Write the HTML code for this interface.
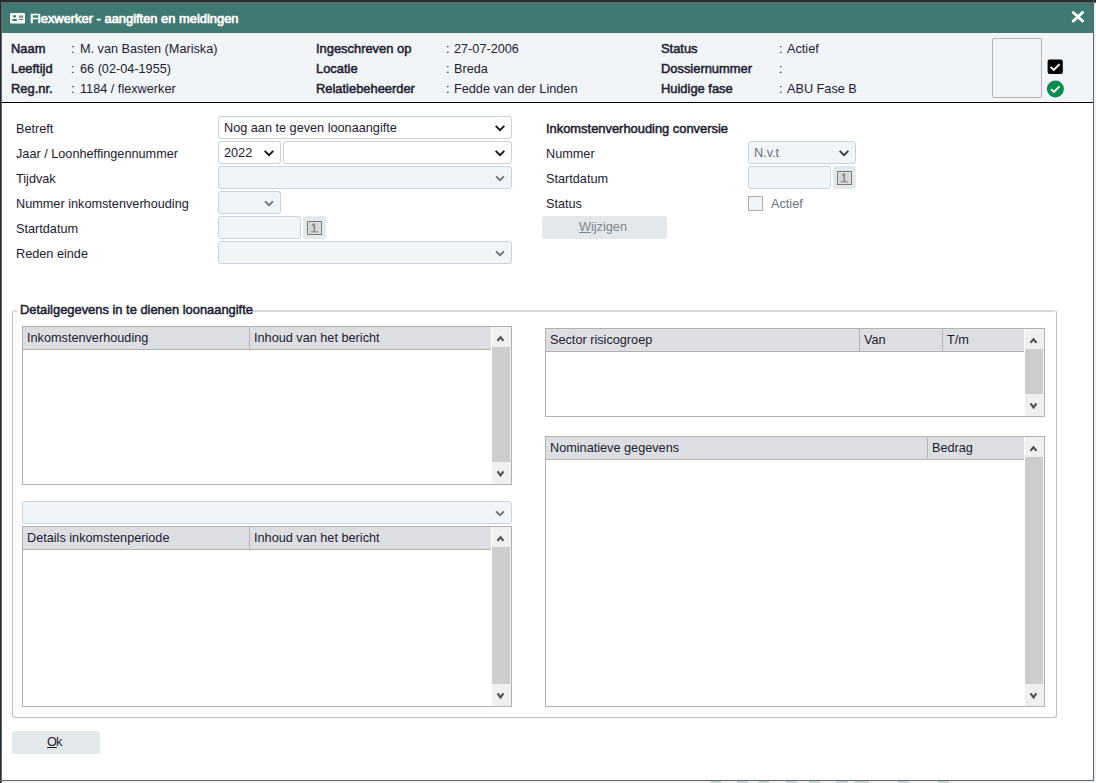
<!DOCTYPE html>
<html><head><meta charset="utf-8">
<style>
*{box-sizing:border-box;margin:0;padding:0}
html,body{width:1096px;height:783px;overflow:hidden;background:#eff3f5}
body{position:relative;font-family:"Liberation Sans",sans-serif;color:#1c2030}
.a{position:absolute}
.t{position:absolute;font-size:12.7px;line-height:14px;white-space:nowrap}
.b{position:absolute;font-size:12.9px;line-height:14px;-webkit-text-stroke:0.5px currentColor;white-space:nowrap}
.sel{position:absolute;border:1px solid #c9d2da;border-radius:3px;background:#fff;height:23px}
.sel.dis{background:#f1f5f8}
.chev{position:absolute;right:6px;top:8px;width:10px;height:7px}
.btn{position:absolute;background:#e3e8eb;border-radius:3px}
.tbl{position:absolute;border:1px solid #b2b2b2;background:#fff}
.th{position:absolute;left:0;top:0;height:23px;background:#dddee2;border-bottom:1px solid #b2b2b2}
.thc{position:absolute;top:0;height:22px;border-left:1px solid #b4b4b4}
.sb{position:absolute;top:0;bottom:0;right:0;width:19px;background:#f0f0f0}
.thumb{position:absolute;left:0;right:1px;top:20px;bottom:22px;background:#cdcdcd}
.up,.dn{position:absolute;left:4px;width:9px;height:8px}
.up{top:7px}.dn{bottom:6px}
.up path,.dn path{stroke:#505050;stroke-width:2.1;fill:none}
</style></head><body>
<!-- window frame -->
<div class="a" style="left:0;top:0;width:1094px;height:781px;background:#fff"></div>
<div class="a" style="left:0;top:0;width:1096px;height:3px;background:#646464"></div>
<div class="a" style="left:0;top:0;width:2px;height:783px;background:#646464"></div>
<div class="a" style="left:0;top:0;width:1096px;height:2px;background:#232d34"></div>
<div class="a" style="left:0;top:0;width:1px;height:783px;background:#232d34"></div>
<div class="a" style="left:1093px;top:0;width:1px;height:781px;background:#646464"></div>
<div class="a" style="left:0;top:780px;width:1094px;height:1px;background:#646464"></div>
<div class="a" style="left:0;top:781px;width:1px;height:2px;background:#232d34"></div>
<div class="a" style="left:710px;top:781px;width:11px;height:2px;background:#c9d3da"></div>
<div class="a" style="left:737px;top:781px;width:11px;height:2px;background:#c9d3da"></div>
<div class="a" style="left:758px;top:781px;width:11px;height:2px;background:#c9d3da"></div>
<div class="a" style="left:786px;top:781px;width:11px;height:2px;background:#c9d3da"></div>
<div class="a" style="left:809px;top:781px;width:11px;height:2px;background:#c9d3da"></div>
<div class="a" style="left:836px;top:781px;width:12px;height:2px;background:#c9d3da"></div>
<div class="a" style="left:854px;top:781px;width:15px;height:2px;background:#c9d3da"></div>
<div class="a" style="left:898px;top:781px;width:11px;height:2px;background:#c9d3da"></div>
<div class="a" style="left:938px;top:781px;width:11px;height:2px;background:#c9d3da"></div>
<!-- title bar -->
<div class="a" style="left:2px;top:3px;width:1091px;height:30px;background:#407971"></div>
<svg class="a" style="left:10px;top:12px" width="16" height="12" viewBox="0 0 16 12">
<rect x="0" y="0.9" width="15" height="10.7" rx="1.2" fill="#fff"/>
<circle cx="4.6" cy="4.3" r="1.4" fill="#417970"/>
<rect x="2.1" y="7.1" width="5" height="2" rx="1" fill="#417970"/>
<rect x="9.1" y="3.4" width="3.9" height="2.4" fill="#417970" opacity="0.8"/>
<rect x="9.1" y="7" width="3.9" height="1" fill="#417970"/>
</svg>
<div class="b" style="left:30px;top:12px;color:#fff;-webkit-text-stroke:0.7px #fff">Flexwerker - aangiften en meldingen</div>
<svg class="a" style="left:1070px;top:9px" width="16" height="16" viewBox="0 0 16 16">
<path d="M3.3 3.5 L12.5 12.0 M12.5 3.5 L3.3 12.0" stroke="#fff" stroke-width="3" stroke-linecap="round"/>
</svg>
<!-- header info -->
<div class="a" style="left:2px;top:33px;width:1091px;height:69px;background:#f2f5f8"></div>
<div class="a" style="left:2px;top:102px;width:1091px;height:1px;background:#000"></div>

<div class="b" style="left:11px;top:42px">Naam</div>
<div class="b" style="left:11px;top:62px">Leeftijd</div>
<div class="b" style="left:11px;top:82px">Reg.nr.</div>
<div class="t" style="left:71px;top:42px">:</div>
<div class="t" style="left:71px;top:62px">:</div>
<div class="t" style="left:71px;top:82px">:</div>
<div class="t" style="left:80px;top:42px">M. van Basten (Mariska)</div>
<div class="t" style="left:80px;top:62px">66 (02-04-1955)</div>
<div class="t" style="left:80px;top:82px">1184 / flexwerker</div>

<div class="b" style="left:316px;top:42px">Ingeschreven op</div>
<div class="b" style="left:316px;top:62px">Locatie</div>
<div class="b" style="left:316px;top:82px">Relatiebeheerder</div>
<div class="t" style="left:446px;top:42px">:</div>
<div class="t" style="left:446px;top:62px">:</div>
<div class="t" style="left:446px;top:82px">:</div>
<div class="t" style="left:454px;top:42px">27-07-2006</div>
<div class="t" style="left:454px;top:62px">Breda</div>
<div class="t" style="left:454px;top:82px">Fedde van der Linden</div>

<div class="b" style="left:661px;top:42px">Status</div>
<div class="b" style="left:661px;top:62px">Dossiernummer</div>
<div class="b" style="left:661px;top:82px">Huidige fase</div>
<div class="t" style="left:779px;top:42px">:</div>
<div class="t" style="left:779px;top:62px">:</div>
<div class="t" style="left:779px;top:82px">:</div>
<div class="t" style="left:787px;top:42px">Actief</div>
<div class="t" style="left:787px;top:82px">ABU Fase B</div>

<div class="a" style="left:992px;top:38px;width:50px;height:60px;border:1px solid #b4b4b4;border-radius:2px"></div>
<svg class="a" style="left:1047px;top:59px" width="17" height="16" viewBox="0 0 17 16">
<rect x="0.6" y="0.5" width="15.2" height="14.5" rx="2" fill="#000"/>
<path d="M3.6 7.9 L6.8 10.9 L12.6 5.1" stroke="#fff" stroke-width="1.9" fill="none"/>
</svg>
<svg class="a" style="left:1046px;top:80px" width="18" height="18" viewBox="0 0 18 18">
<circle cx="9.4" cy="8.9" r="8.5" fill="#068c4c"/>
<path d="M4.9 9.1 L7.9 12.0 L13.5 6.4" stroke="#fff" stroke-width="1.9" fill="none"/>
</svg>

<!-- form -->
<div class="t" style="left:16px;top:121.5px;">Betreft</div>
<div class="t" style="left:16px;top:146.5px;">Jaar / Loonheffingennummer</div>
<div class="t" style="left:16px;top:171.5px;">Tijdvak</div>
<div class="t" style="left:16px;top:196.5px;">Nummer inkomstenverhouding</div>
<div class="t" style="left:16px;top:221.5px;">Startdatum</div>
<div class="t" style="left:16px;top:246.5px;">Reden einde</div>
<div class="sel" style="left:218px;top:116px;width:294px"><div class="t" style="left:5px;top:3.5px">Nog aan te geven loonaangifte</div><svg class="chev" viewBox="0 0 10 7"><path d="M1.4 1.6 L5 5.2 L8.6 1.6" stroke="#15181d" stroke-width="2" stroke-linecap="square" fill="none"/></svg></div>
<div class="sel" style="left:218px;top:141px;width:63px"><div class="t" style="left:5px;top:3.5px">2022</div><svg class="chev" viewBox="0 0 10 7"><path d="M1.4 1.6 L5 5.2 L8.6 1.6" stroke="#15181d" stroke-width="2" stroke-linecap="square" fill="none"/></svg></div>
<div class="sel" style="left:283px;top:141px;width:229px"><svg class="chev" viewBox="0 0 10 7"><path d="M1.4 1.6 L5 5.2 L8.6 1.6" stroke="#15181d" stroke-width="2" stroke-linecap="square" fill="none"/></svg></div>
<div class="sel dis" style="left:218px;top:166px;width:294px"><svg class="chev" viewBox="0 0 10 7"><path d="M1.1 1.4 L5 5.2 L8.9 1.4" stroke="#6c7178" stroke-width="1.8" fill="none"/></svg></div>
<div class="sel dis" style="left:218px;top:191px;width:63px"><svg class="chev" viewBox="0 0 10 7"><path d="M1.1 1.4 L5 5.2 L8.9 1.4" stroke="#6c7178" stroke-width="1.8" fill="none"/></svg></div>
<div class="sel dis" style="left:218px;top:216px;width:83px"></div>
<div class="btn" style="left:303px;top:216px;width:23px;height:23px"><svg class="a" viewBox="0 0 15 14" width="15" height="14" style="left:4px;top:5px"><rect x="0.5" y="0.5" width="14" height="13" fill="#e2e2e2" stroke="#7a7a7a"/><path d="M3.2 1V13M5.7 1V13M8.2 1V13M10.7 1V13M1 3.3H14M1 5.8H14M1 8.3H14M1 10.8H14" stroke="#cacaca" stroke-width="0.7"/><path d="M5.2 4.6 L7.3 2.8 M7.3 2.6 V10.4" stroke="#858585" stroke-width="1.5" fill="none"/><path d="M3.8 10.8 H10.9" stroke="#858585" stroke-width="1.1"/></svg></div>
<div class="sel dis" style="left:218px;top:241px;width:294px"><svg class="chev" viewBox="0 0 10 7"><path d="M1.1 1.4 L5 5.2 L8.9 1.4" stroke="#6c7178" stroke-width="1.8" fill="none"/></svg></div>
<div class="b" style="left:546px;top:121.5px;">Inkomstenverhouding conversie</div>
<div class="t" style="left:546px;top:146.5px;">Nummer</div>
<div class="t" style="left:546px;top:171.5px;">Startdatum</div>
<div class="t" style="left:546px;top:196.5px;">Status</div>
<div class="sel dis" style="left:748px;top:141px;width:108px"><div class="t" style="left:5px;top:3.5px;color:#6c7178">N.v.t</div><svg class="chev" viewBox="0 0 10 7"><path d="M1.4 1.6 L5 5.2 L8.6 1.6" stroke="#3c4048" stroke-width="2" stroke-linecap="square" fill="none"/></svg></div>
<div class="sel dis" style="left:748px;top:166px;width:83px"></div>
<div class="btn" style="left:833px;top:166px;width:23px;height:23px"><svg class="a" viewBox="0 0 15 14" width="15" height="14" style="left:4px;top:5px"><rect x="0.5" y="0.5" width="14" height="13" fill="#e2e2e2" stroke="#7a7a7a"/><path d="M3.2 1V13M5.7 1V13M8.2 1V13M10.7 1V13M1 3.3H14M1 5.8H14M1 8.3H14M1 10.8H14" stroke="#cacaca" stroke-width="0.7"/><path d="M5.2 4.6 L7.3 2.8 M7.3 2.6 V10.4" stroke="#858585" stroke-width="1.5" fill="none"/><path d="M3.8 10.8 H10.9" stroke="#858585" stroke-width="1.1"/></svg></div>
<div class="a" style="left:748px;top:196px;width:15px;height:15px;border:1px solid #ababab;border-radius:0;background:#f2f5f8"></div>
<div class="t" style="left:771px;top:196.5px;color:#6c7178">Actief</div>
<div class="btn" style="left:542px;top:216px;width:125px;height:23px"></div>
<div class="t" style="left:579px;top:219.5px;color:#80868d"><u>W</u>ijzigen</div>

<!-- fieldset -->
<div class="a" style="left:12px;top:310px;width:1045px;height:408px;border:1px solid #c0c0c0;border-top-color:#d9d9d9;border-radius:3px"></div>
<div class="a" style="left:15px;top:311px;width:1039px;height:1px;background:#d9d9d9"></div>
<div class="a" style="left:17px;top:300px;width:235px;height:16px;background:#fff"></div>
<div class="b" style="left:20px;top:302.5px">Detailgegevens in te dienen loonaangifte</div>
<div class="tbl" style="left:22px;top:326px;width:490px;height:159px"><div class="th" style="width:468px"></div><div class="t" style="left:4px;top:3.5px">Inkomstenverhouding</div><div class="thc" style="left:226px"></div><div class="t" style="left:231px;top:3.5px">Inhoud van het bericht</div><div class="sb"><svg class="up" viewBox="0 0 9 8"><path d="M1.5 6.9 L4.5 3.1 L7.5 6.9"/></svg><div class="thumb"></div><svg class="dn" viewBox="0 0 9 8"><path d="M1.5 1.3 L4.5 5.4 L7.5 1.3"/></svg></div></div>
<div class="sel dis" style="left:22px;top:501px;width:490px"><svg class="chev" viewBox="0 0 10 7"><path d="M1.1 1.4 L5 5.2 L8.9 1.4" stroke="#6c7178" stroke-width="1.8" fill="none"/></svg></div>
<div class="tbl" style="left:22px;top:526px;width:490px;height:181px"><div class="th" style="width:468px"></div><div class="t" style="left:4px;top:3.5px">Details inkomstenperiode</div><div class="thc" style="left:226px"></div><div class="t" style="left:231px;top:3.5px">Inhoud van het bericht</div><div class="sb"><svg class="up" viewBox="0 0 9 8"><path d="M1.5 6.9 L4.5 3.1 L7.5 6.9"/></svg><div class="thumb"></div><svg class="dn" viewBox="0 0 9 8"><path d="M1.5 1.3 L4.5 5.4 L7.5 1.3"/></svg></div></div>
<div class="tbl" style="left:545px;top:328px;width:500px;height:89px"><div class="th" style="width:478px"></div><div class="t" style="left:4px;top:3.5px">Sector risicogroep</div><div class="thc" style="left:313px"></div><div class="t" style="left:318px;top:3.5px">Van</div><div class="thc" style="left:396px"></div><div class="t" style="left:401px;top:3.5px">T/m</div><div class="sb"><svg class="up" viewBox="0 0 9 8"><path d="M1.5 6.9 L4.5 3.1 L7.5 6.9"/></svg><div class="thumb"></div><svg class="dn" viewBox="0 0 9 8"><path d="M1.5 1.3 L4.5 5.4 L7.5 1.3"/></svg></div></div>
<div class="tbl" style="left:545px;top:436px;width:500px;height:271px"><div class="th" style="width:478px"></div><div class="t" style="left:4px;top:3.5px">Nominatieve gegevens</div><div class="thc" style="left:381px"></div><div class="t" style="left:386px;top:3.5px">Bedrag</div><div class="sb"><svg class="up" viewBox="0 0 9 8"><path d="M1.5 6.9 L4.5 3.1 L7.5 6.9"/></svg><div class="thumb"></div><svg class="dn" viewBox="0 0 9 8"><path d="M1.5 1.3 L4.5 5.4 L7.5 1.3"/></svg></div></div>

<!-- ok -->
<div class="btn" style="left:12px;top:731px;width:88px;height:23px"></div>
<div class="t" style="left:47px;top:735px;text-decoration:underline">O</div>
<div class="t" style="left:56px;top:735px">k</div>
</body></html>
